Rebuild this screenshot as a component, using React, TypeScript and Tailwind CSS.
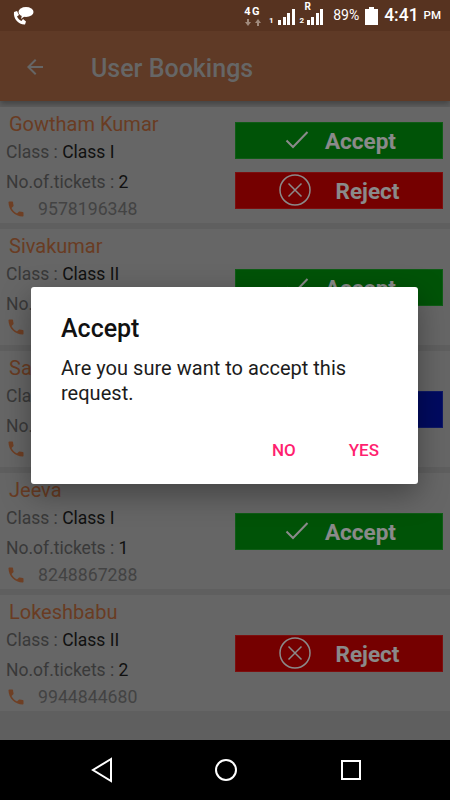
// rows hidden by the dialog only carry the part of the text that shows in the shot
const bookings = [
  { name: "Gowtham Kumar", classLabel: "Class : ", cls: "Class I", ticketLabel: "No.of.tickets : ", tickets: "2", phone: "9578196348", actions: ["accept", "reject"] },
  { name: "Sivakumar", classLabel: "Class : ", cls: "Class II", ticketLabel: "No.", tickets: "", phone: "", actions: ["accept"] },
  { name: "Sa", classLabel: "Cla", cls: "", ticketLabel: "No.", tickets: "", phone: "", actions: ["blue"] },
  { name: "Jeeva", classLabel: "Class : ", cls: "Class I", ticketLabel: "No.of.tickets : ", tickets: "1", phone: "8248867288", actions: ["accept"] },
  { name: "Lokeshbabu", classLabel: "Class : ", cls: "Class II", ticketLabel: "No.of.tickets : ", tickets: "2", phone: "9944844680", actions: ["reject"] },
];

function PhoneIcon() {
  return (
    <svg viewBox="0 0 24 24" className="h-5 w-5 fill-[#b8693c]">
      <path d="M6.62 10.79c1.44 2.83 3.76 5.14 6.59 6.59l2.2-2.2c.27-.27.67-.36 1.02-.24 1.12.37 2.33.57 3.57.57.55 0 1 .45 1 1V20c0 .55-.45 1-1 1-9.39 0-17-7.61-17-17 0-.55.45-1 1-1h3.5c.55 0 1 .45 1 1 0 1.25.2 2.45.57 3.57.11.35.03.74-.25 1.02l-2.2 2.2z" />
    </svg>
  );
}

function ActionButton({ kind }: { kind: string }) {
  if (kind === "accept") {
    return (
      <div className="flex h-[37px] items-center justify-center gap-[13px] border border-[#1a9a26] bg-[#008a0d] text-[22.500px] font-bold text-[#e6e6e6]">
        <svg viewBox="0 0 30 30" className="h-[30px] w-[30px] fill-none stroke-[#e6e6e6] stroke-2">
          <path d="M4.500 15.500 L11 22 L25.500 7" />
        </svg>
        <span className="pt-[3px]">Accept</span>
      </div>
    );
  }
  if (kind === "reject") {
    return (
      <div className="flex h-[37px] items-center justify-center gap-[25px] border border-[#d01a1a] bg-[#c40000] text-[22.500px] font-bold text-[#e6e6e6]">
        <svg viewBox="0 0 32 32" className="h-[32px] w-[32px] fill-none stroke-[#e6e6e6] stroke-[1.5]">
          <circle cx="16" cy="16" r="15" />
          <path d="M9.500 9.500 L22.500 22.500 M22.500 9.500 L9.500 22.500" />
        </svg>
        <span className="pt-[3px]">Reject</span>
      </div>
    );
  }
  return <div className="h-[37px] border border-[#1a2aa8] bg-[#0011a0]" />;
}

function BookingCard({ name, classLabel, cls, ticketLabel, tickets, phone, actions }: (typeof bookings)[0]) {
  return (
    <div className="flex h-[116px] bg-[#aaaaaa]">
      <div className="flex w-[235px] flex-col pl-[6px] text-[17.500px] leading-[28px] text-[#606060]">
        <p className="-mt-[1px] pl-[3px] text-[20px] leading-[36px] text-[#b0653a]">{name}</p>
        <p className="-mt-[4px]">
          {classLabel}
          <span className="text-[#1c1c1c]">{cls}</span>
        </p>
        <p className="mt-[2px]">
          {ticketLabel}
          <span className="text-[#1c1c1c]">{tickets}</span>
        </p>
        <div className="-mt-[1px] flex items-center gap-[12px] text-[17.700px] text-[#707070]">
          <PhoneIcon />
          {phone}
        </div>
      </div>
      <div className="flex w-[208px] flex-col justify-center gap-[13px]">
        {actions.map((a) => (
          <ActionButton key={a} kind={a} />
        ))}
      </div>
    </div>
  );
}

function SignalBars() {
  return (
    <>
      <span className="h-[5px] w-[3px] bg-white" />
      <span className="h-[8px] w-[3px] bg-white" />
      <span className="h-[12px] w-[3px] bg-white" />
      <span className="h-[16px] w-[3px] bg-white" />
    </>
  );
}

function StatusBar() {
  return (
    <div className="flex h-[31px] items-center bg-[#573320] pl-[12px] pr-[9px] text-white">
      <svg viewBox="0 0 22 20" className="h-[20px] w-[22px] fill-white">
        <ellipse cx="14" cy="6" rx="7.500" ry="5" />
        <path d="M10 9 L9 13 L13 10 Z" />
        <path d="M2 6 L5 5 L7 9 L5 10.500 C6 12.500 7.500 14 9.500 15 L11 13 L14 15.500 L13 18.500 C7 19 1 13 2 6 Z" />
      </svg>
      <div className="ml-auto flex flex-col items-center">
        <span className="text-[11px] font-bold leading-[11px] tracking-[1.500px]">4G</span>
        <svg viewBox="0 0 16 7" className="mt-[2px] h-[7px] w-[16px] fill-[#a08a7c]">
          <path d="M2 0 H4 V3 H6 L3 7 L0 3 H2 Z" />
          <path d="M12 7 H14 V4 H16 L13 0 L10 4 H12 Z" />
        </svg>
      </div>
      <div className="ml-[8px] flex items-end gap-[1.500px] pt-[3px]">
        <span className="mr-[3px] text-[8px] font-bold leading-[9px]">1</span>
        <SignalBars />
      </div>
      <div className="relative ml-[5px] flex items-end gap-[1.500px] pt-[3px]">
        <span className="mr-[1px] text-[8px] font-bold leading-[9px]">2</span>
        <SignalBars />
        <span className="absolute left-[5px] top-[-4px] text-[10px] font-bold leading-[10px]">R</span>
      </div>
      <span className="ml-[10px] text-[14px]">89%</span>
      <svg viewBox="0 0 13 18" className="ml-[6px] h-[18px] w-[13px] fill-white">
        <path d="M4 0 H9 V2 H13 V18 H0 V2 H4 Z" />
      </svg>
      <span className="ml-[6px] text-[17.500px] font-medium">4:41</span>
      <span className="ml-[5px] text-[11.500px] font-medium">PM</span>
    </div>
  );
}

export default function App() {
  return (
    <div className="flex h-[800px] w-[450px] flex-col overflow-hidden bg-black font-['Roboto',sans-serif]">
      <StatusBar />
      <div className="relative flex-1 overflow-hidden bg-[#9e9e9e]">
        <div className="flex h-[70px] items-center bg-[#9e6140] pl-[23px] text-[25px] font-medium text-[#aaaaaa] shadow-[0_3px_6px_rgba(0,0,0,0.3)]">
          <svg viewBox="0 0 24 24" className="mt-[2px] h-6 w-6 fill-[#aaaaaa]">
            <path d="M20 11H7.830l5.590-5.590L12 4l-8 8 8 8 1.410-1.410L7.830 13H20v-2z" />
          </svg>
          <span className="ml-[44px] pt-[6px]">User Bookings</span>
        </div>
        <div className="mt-[6px] flex flex-col gap-[6px]">
          {bookings.map((b) => (
            <BookingCard key={b.name} {...b} />
          ))}
        </div>
        <div className="absolute inset-0 flex items-center justify-center bg-black/40">
          <div className="-ml-[1px] flex h-[197px] w-[387px] flex-col rounded-[3px] bg-white px-[30px] pt-[27px] text-[#111111] shadow-[0_10px_30px_rgba(0,0,0,0.35)]">
            <p className="text-[25px] font-medium leading-[30px]">Accept</p>
            <p className="mt-[12px] text-[20px] leading-[25px] tracking-[0.020px] text-[#1c1c1c]">
              Are you sure want to accept this request.
            </p>
            <div className="mt-auto mb-[24px] flex justify-end gap-[53px] pr-[9px] text-[17px] font-medium leading-[20px] text-[#ff1f70]">
              <span>NO</span>
              <span>YES</span>
            </div>
          </div>
        </div>
      </div>
      <div className="flex h-[60px] items-center justify-center bg-black">
        <svg viewBox="0 0 24 26" className="h-[26px] w-[24px] fill-none stroke-white stroke-2">
          <path d="M21 2 L3 13 L21 24 Z" />
        </svg>
        <div className="ml-[101px] h-[22px] w-[22px] rounded-full border-2 border-white" />
        <div className="ml-[104px] h-[20px] w-[20px] border-2 border-white" />
      </div>
    </div>
  );
}
